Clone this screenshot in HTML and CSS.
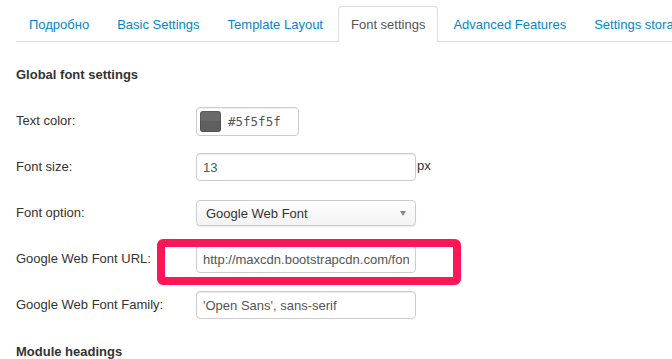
FILE: index.html
```html
<!DOCTYPE html>
<html>
<head>
<meta charset="utf-8">
<link rel="stylesheet" href="styles.css">
</head>
<body>
<ul class="tabs">
  <li><a href="#">Подробно</a></li>
  <li><a href="#">Basic Settings</a></li>
  <li><a href="#">Template Layout</a></li>
  <li class="active"><a href="#">Font settings</a></li>
  <li><a href="#">Advanced Features</a></li>
  <li><a href="#">Settings storage</a></li>
</ul>
<div class="content">
  <h4 class="section">Global font settings</h4>
  <div class="row">
    <label class="label">Text color:</label>
    <div class="color-input"><span class="swatch"></span><span class="hex">#5f5f5f</span></div>
  </div>
  <div class="row">
    <label class="label">Font size:</label>
    <input class="field" type="text" value="13"><span class="unit">px</span>
  </div>
  <div class="row">
    <label class="label">Font option:</label>
    <div class="select"><span>Google Web Font</span><span class="caret"></span></div>
  </div>
  <div class="row highlighted">
    <label class="label">Google Web Font URL:</label>
    <input class="field" type="text" value="http://maxcdn.bootstrapcdn.com/font-awesome/4.3.0/css/font-awesome.min.css">
    <span class="marker"></span>
  </div>
  <div class="row">
    <label class="label">Google Web Font Family:</label>
    <input class="field" type="text" value="'Open Sans', sans-serif">
  </div>
  <h4 class="section section-next">Module headings</h4>
</div>
</body>
</html>
```
FILE: styles.css
```css
html, body {
  margin: 0;
  padding: 0;
  background: #fff;
  font-family: "Liberation Sans", Arial, sans-serif;
  font-size: 13px;
  color: #333;
  overflow: hidden;
}

.tabs {
  list-style: none;
  margin: 0 0 0 16px;
  padding: 6px 0 0 0;
  display: flex;
  border-bottom: 1px solid #ddd;
  white-space: nowrap;
}
.tabs li {
  margin-right: 2px;
  margin-bottom: -1px;
}
.tabs a {
  display: block;
  padding: 8px 12px 6px;
  line-height: 20px;
  border: 1px solid transparent;
  border-radius: 4px 4px 0 0;
  color: #0088cc;
  text-decoration: none;
}
.tabs .active a {
  color: #555;
  background: #fff;
  border-color: #ddd #ddd transparent;
}

.content {
  padding: 0 16px;
}
.section {
  margin: 23px 0 22px;
  font-size: 13px;
  line-height: 20px;
  font-weight: bold;
  color: #333;
}
.section-next {
  margin-top: 23px;
}

.row {
  position: relative;
  display: flex;
  align-items: center;
  height: 28px;
  margin-bottom: 18px;
}
.label {
  width: 180px;
  flex: none;
  color: #333;
  line-height: 20px;
}

.color-input {
  box-sizing: border-box;
  width: 103px;
  height: 29px;
  border: 1px solid #ccc;
  border-radius: 4px;
  display: flex;
  align-items: center;
  padding-left: 3px;
  box-shadow: inset 0 1px 1px rgba(0,0,0,0.06);
}
.swatch {
  width: 21px;
  height: 21px;
  border-radius: 3px;
  background: linear-gradient(#6a6a6a 0, #6a6a6a 45%, #5f5f5f 50%, #5f5f5f 100%);
  box-shadow: inset 0 0 0 1px rgba(0,0,0,0.15);
}
.hex {
  margin-left: 7px;
  font-family: "DejaVu Sans Mono", "Liberation Mono", monospace;
  font-size: 12.5px;
  color: #555;
}

.field {
  box-sizing: border-box;
  width: 220px;
  height: 28px;
  margin: 0;
  padding: 4px 6px;
  border: 1px solid #ccc;
  border-radius: 4px;
  font-family: "Liberation Sans", Arial, sans-serif;
  font-size: 13px;
  color: #555;
  background: #fff;
  box-shadow: inset 0 1px 1px rgba(0,0,0,0.075);
  outline: none;
}
.unit {
  margin-left: 1px;
  margin-bottom: 3px;
  color: #333;
}

.select {
  box-sizing: border-box;
  width: 220px;
  height: 26px;
  border: 1px solid #ccc;
  border-radius: 4px;
  display: flex;
  align-items: center;
  justify-content: space-between;
  padding: 0 9px 0 9px;
  color: #333;
  background: linear-gradient(#ffffff, #f2f2f2);
  box-shadow: 0 1px 1px rgba(0,0,0,0.08);
}
.caret {
  width: 0;
  height: 0;
  border-left: 3.5px solid transparent;
  border-right: 3.5px solid transparent;
  border-top: 5px solid #888;
}

.marker {
  position: absolute;
  left: 141px;
  top: -6px;
  width: 304px;
  height: 46px;
  box-sizing: border-box;
  border: 8px solid #fe1659;
  border-radius: 6px;
  pointer-events: none;
}
```
